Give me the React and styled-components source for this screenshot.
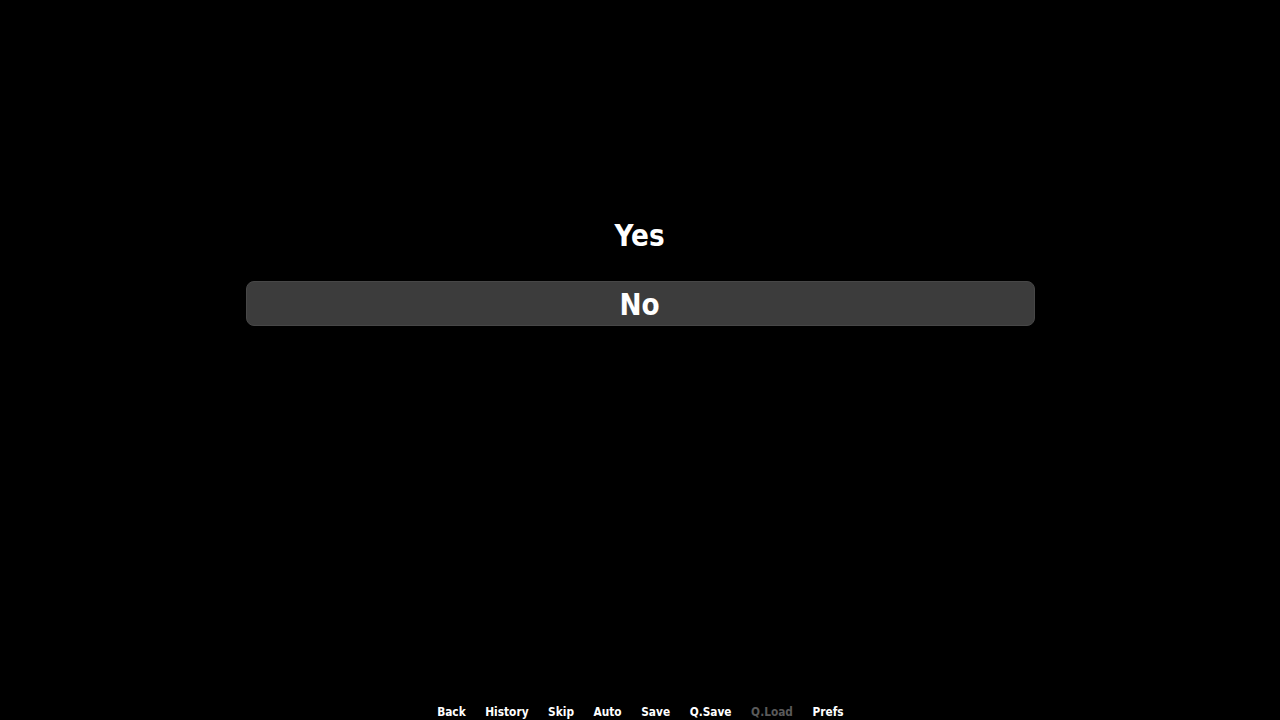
import { styled, createGlobalStyle } from "styled-components"

const GlobalStyle = createGlobalStyle`
  html, body {
    margin: 0;
    padding: 0;
    background: #000;
  }
  body {
    font-family: "DejaVu Sans", sans-serif;
  }
`

const choices = [
  { label: "Yes", selected: false },
  { label: "No", selected: true },
]

const quickItems = [
  { label: "Back" },
  { label: "History" },
  { label: "Skip" },
  { label: "Auto" },
  { label: "Save" },
  { label: "Q.Save" },
  { label: "Q.Load", disabled: true },
  { label: "Prefs" },
]

export default function App() {
  return (
    <>
      <GlobalStyle />
      <Screen>
        <ChoiceMenu>
          {choices.map((c) => (
            <ChoiceButton key={c.label} $selected={c.selected}>
              <ChoiceLabel>{c.label}</ChoiceLabel>
            </ChoiceButton>
          ))}
        </ChoiceMenu>
        <QuickBar>
          <QuickMenu>
            {quickItems.map((q) => (
              <QuickButton key={q.label} $disabled={q.disabled}>
                {q.label}
              </QuickButton>
            ))}
          </QuickMenu>
        </QuickBar>
      </Screen>
    </>
  )
}

const Screen = styled.div`
  width: 1280px;
  height: 720px;
  background: #000;
  display: flex;
  flex-direction: column;
  overflow: hidden;
`

const ChoiceMenu = styled.div`
  display: flex;
  flex-direction: column;
  align-items: center;
  gap: 24px;
  padding-top: 212px;
  flex: 1;
`

const ChoiceButton = styled.div`
  width: 789px;
  height: 45px;
  box-sizing: border-box;
  display: flex;
  align-items: center;
  justify-content: center;
  border-radius: 8px;
  background: ${(p) => (p.$selected ? "#3c3c3c" : "transparent")};
  border: 1px solid ${(p) => (p.$selected ? "#474747" : "transparent")};
  color: #fff;
  cursor: pointer;
`

// the game font is a condensed face; DejaVu is squeezed to match its width
const ChoiceLabel = styled.span`
  display: inline-block;
  font-weight: bold;
  font-size: 31px;
  transform: scaleX(0.85);
`

const QuickBar = styled.div`
  display: flex;
  justify-content: center;
  height: 16px;
`

const QuickMenu = styled.div`
  display: flex;
  gap: 24px;
  transform: scaleX(0.815);
  transform-origin: center;
`

const QuickButton = styled.span`
  font-size: 13px;
  font-weight: bold;
  color: ${(p) => (p.$disabled ? "#5a5a5a" : "#fff")};
  line-height: 16px;
  white-space: nowrap;
`
